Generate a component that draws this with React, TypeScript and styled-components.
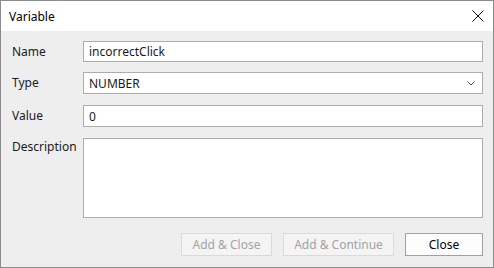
import React from "react";
import styled, { createGlobalStyle } from "styled-components";

const GlobalStyle = createGlobalStyle`
  html, body {
    margin: 0;
    padding: 0;
    background: #ffffff;
  }
  * {
    box-sizing: border-box;
  }
`;

const Window = styled.div`
  width: 494px;
  height: 268px;
  border: 1px solid #8c8c8c;
  display: flex;
  flex-direction: column;
  font-family: "Noto Sans", "Open Sans", sans-serif;
  font-size: 12px;
  color: #1a1a1a;
  background: #eeeeee;
`;

const TitleBar = styled.div`
  height: 30px;
  background: #ffffff;
  display: flex;
  align-items: center;
  justify-content: space-between;
  padding: 0 8px 0 8px;
`;

const Title = styled.span`
  font-size: 12px;
  color: #000;
`;

const CloseIcon = styled.svg`
  width: 12px;
  height: 12px;
  margin-right: 1px;
`;

const Body = styled.div`
  flex: 1;
  display: flex;
  flex-direction: column;
  padding: 10px 10px 0 10px;
`;

const Row = styled.div<{ $top: number; $align?: string }>`
  display: grid;
  grid-template-columns: 72px 1fr;
  align-items: ${(p) => p.$align || "center"};
  margin-top: ${(p) => p.$top}px;
`;

const Label = styled.label`
  padding-left: 1px;
  line-height: 18px;
`;

const Input = styled.div<{ $h: number }>`
  height: ${(p) => p.$h}px;
  border: 1px solid #adadad;
  background: #ffffff;
  padding: 0 5px;
  display: flex;
  align-items: center;
  justify-content: space-between;
`;

const Chevron = styled.svg`
  width: 8px;
  height: 5px;
  margin-right: 2px;
`;

const Buttons = styled.div`
  display: flex;
  justify-content: flex-end;
  gap: 11px;
  margin-top: 15px;
`;

const Button = styled.button<{ $w: number; $disabled?: boolean }>`
  width: ${(p) => p.$w}px;
  height: 23px;
  font-family: inherit;
  font-size: 12px;
  padding: 0;
  border: 1px solid ${(p) => (p.$disabled ? "#dadada" : "#a0a0a0")};
  background: ${(p) => (p.$disabled ? "#f4f4f4" : "#fdfdfd")};
  color: ${(p) => (p.$disabled ? "#a3a3a3" : "#000")};
`;

export default function App() {
  return (
    <>
      <GlobalStyle />
      <Window>
        <TitleBar>
          <Title>Variable</Title>
          <CloseIcon viewBox="0 0 12 12">
            <path d="M0.5 0.5 L11.5 11.5 M11.5 0.5 L0.5 11.5" stroke="#111" strokeWidth="1" fill="none" />
          </CloseIcon>
        </TitleBar>
        <Body>
          <Row $top={0}>
            <Label>Name</Label>
            <Input $h={21}>incorrectClick</Input>
          </Row>
          <Row $top={10}>
            <Label>Type</Label>
            <Input $h={22}>
              NUMBER
              <Chevron viewBox="0 0 8 5">
                <path d="M0.5 0.5 L4 4 L7.5 0.5" stroke="#555" strokeWidth="1" fill="none" />
              </Chevron>
            </Input>
          </Row>
          <Row $top={11}>
            <Label>Value</Label>
            <Input $h={22}>0</Input>
          </Row>
          <Row $top={11} $align="start">
            <Label>Description</Label>
            <Input $h={80} />
          </Row>
          <Buttons>
            <Button $w={91} $disabled>Add &amp; Close</Button>
            <Button $w={111} $disabled>Add &amp; Continue</Button>
            <Button $w={78}>Close</Button>
          </Buttons>
        </Body>
      </Window>
    </>
  );
}
